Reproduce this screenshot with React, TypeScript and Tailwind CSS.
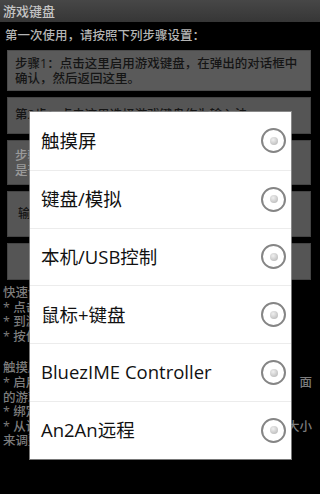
import React from 'react';

const font = { fontFamily: '"Open Sans", "Noto Sans CJK SC", sans-serif' };

const options = ['触摸屏', '键盘/模拟', '本机/USB控制', '鼠标+键盘', 'BluezIME Controller', 'An2An远程'];

function Radio() {
  return (
    <div className="w-[25px] h-[25px] rounded-full border-2 border-[#858585] flex items-center justify-center">
      <div className="w-[8px] h-[8px] rounded-full bg-[radial-gradient(circle_at_40%_35%,#f0f0f0,#b0b0b0)]" />
    </div>
  );
}

export default function App() {
  return (
    <div className="relative w-[320px] h-[494px] bg-black overflow-hidden" style={font}>
      {/* Title bar */}
      <div className="h-[22px] bg-[linear-gradient(#474747,#363636)] flex items-center px-[3px] text-[13px] text-[#c4c4c4] leading-none font-medium">
        游戏键盘
      </div>

      <div className="h-[28px] flex items-center pl-[5px] text-[12.5px] text-[#b4b4b4] leading-none font-medium">
        第一次使用，请按照下列步骤设置：
      </div>

      {/* Steps */}
      <div className="flex flex-col gap-[6px] ml-[7px] mr-[9px] font-medium">
        <div className="h-[41px] bg-[#5a5a5a] border border-[#4a4a4a] px-[7px] flex flex-col justify-center text-[12.5px] leading-[15px] text-[#151515]">
          <div>步骤1：点击这里启用游戏键盘，在弹出的对话框中</div>
          <div>确认，然后返回这里。</div>
        </div>
        <div className="h-[37px] bg-[#555] border border-[#444] px-[7px] flex items-center text-[12.5px] text-[#151515]">
          第2步：点击这里选择游戏键盘作为输入法
        </div>
        <div className="h-[45px] bg-[#555] border border-[#444] px-[7px] flex flex-col justify-center text-[12.5px] leading-[15px] text-[#9a9a9a]">
          <div>步骤3：选择游戏模式</div>
          <div>是否已启用</div>
        </div>
        <div className="h-[46px] bg-[#555] border border-[#444] pl-[10px] flex items-center text-[12.5px] text-[#151515]">
          输入法设置
        </div>
        <div className="h-[37px] bg-[#555] border border-[#444]" />
      </div>

      {/* Help text */}
      <div className="mt-[6px] pl-[3px] pr-[8px] text-[12.5px] leading-[14.6px] text-[#7c7c7c] font-medium">
        <div>快速设置：</div>
        <div>* 点击按钮</div>
        <div>* 到游戏中</div>
        <div>* 按住菜单</div>
        <div className="h-[17px]" />
        <div>触摸屏模式：</div>
        <div className="flex justify-between"><span>* 启用后</span><span>面</span></div>
        <div>的游戏</div>
        <div>* 绑定按键</div>
        <div className="flex justify-between"><span>* 从设置</span><span>大小</span></div>
        <div>来调整</div>
      </div>

      {/* Dialog */}
      <div className="absolute left-[30px] top-[112px] w-[261px] bg-white shadow-[0_0_0_1px_rgba(150,150,150,0.8)]">
        {options.map((o, i) => (
          <div
            key={o}
            className={`h-[57.8px] flex items-center justify-between pl-[11px] pr-[5px] ${i > 0 ? 'border-t border-[#ececec]' : ''}`}
          >
            <span className="text-[18.5px] text-[#111] leading-none">{o}</span>
            <Radio />
          </div>
        ))}
      </div>
    </div>
  );
}
